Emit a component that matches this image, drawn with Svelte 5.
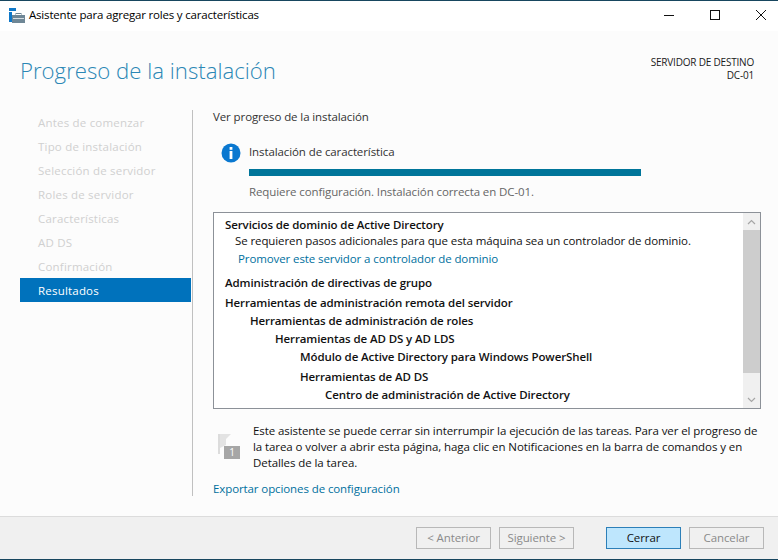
<script lang="ts">
  const steps = [
    'Antes de comenzar',
    'Tipo de instalación',
    'Selección de servidor',
    'Roles de servidor',
    'Características',
    'AD DS',
    'Confirmación',
    'Resultados'
  ];

  const tree = [
    { text: 'Administración de directivas de grupo', level: 0, gap: 'wide' },
    { text: 'Herramientas de administración remota del servidor', level: 0, gap: 'small' },
    { text: 'Herramientas de administración de roles', level: 1 },
    { text: 'Herramientas de AD DS y AD LDS', level: 2 },
    { text: 'Módulo de Active Directory para Windows PowerShell', level: 3 },
    { text: 'Herramientas de AD DS', level: 3, gap: 'small' },
    { text: 'Centro de administración de Active Directory', level: 4 }
  ];
</script>

<div class="window">
  <header class="titlebar">
    <svg class="appicon" width="16" height="16" viewBox="0 0 16 16">
      <rect x="0" y="0" width="7" height="3" fill="#0f78c8" />
      <rect x="0" y="4" width="3" height="10" fill="#0f78c8" />
      <rect x="3" y="7" width="13" height="8" fill="#6f8796" />
      <rect x="7" y="5.5" width="5" height="2" fill="none" stroke="#6f8796" />
      <rect x="4" y="10" width="11" height="1" fill="#d5dde2" />
    </svg>
    <span class="title">Asistente para agregar roles y características</span>
    <div class="winbtns">
      <svg width="12" height="12" viewBox="0 0 12 12"><path d="M1 6.5h10" stroke="#111" fill="none" /></svg>
      <svg width="12" height="12" viewBox="0 0 12 12"><rect x="1.5" y="1.5" width="9" height="9" stroke="#111" fill="none" /></svg>
      <svg width="12" height="12" viewBox="0 0 12 12"><path d="M1 1l10 10M11 1L1 11" stroke="#111" fill="none" /></svg>
    </div>
  </header>

  <div class="page">
    <div class="head">
      <h1>Progreso de la instalación</h1>
      <div class="server">SERVIDOR DE DESTINO<br />DC-01</div>
    </div>

    <div class="body">
      <nav class="steps">
        {#each steps as step, i}
          <div class="step" class:active={i === steps.length - 1}>{step}</div>
        {/each}
      </nav>

      <main class="content">
        <div class="lead">Ver progreso de la instalación</div>

        <div class="status">
          <svg class="info" width="20" height="20" viewBox="0 0 20 20">
            <circle cx="10" cy="10" r="9.5" fill="#0a78d0" />
            <rect x="8.6" y="4" width="2.8" height="2.8" fill="#fff" />
            <rect x="8.6" y="8" width="2.8" height="8" fill="#fff" />
          </svg>
          <div class="statusmain">
            <div class="statustitle">Instalación de característica</div>
            <div class="bar"></div>
            <div class="statusnote">Requiere configuración. Instalación correcta en DC-01.</div>
          </div>
        </div>

        <div class="listbox">
          <div class="list">
            <div class="row">Servicios de dominio de Active Directory</div>
            <div class="row sub">Se requieren pasos adicionales para que esta máquina sea un controlador de dominio.</div>
            <div class="row promote">Promover este servidor a controlador de dominio</div>
            {#each tree as item}
              <div class="row level{item.level} {item.gap ?? ''}">{item.text}</div>
            {/each}
          </div>
          <div class="scrollbar">
            <div class="arrow">
              <svg width="9" height="6" viewBox="0 0 9 6"><path d="M1 5l3.5-3.5L8 5" stroke="#a6a6a6" stroke-width="1.2" fill="none" /></svg>
            </div>
            <div class="thumb"></div>
            <div class="track"></div>
            <div class="arrow">
              <svg width="9" height="6" viewBox="0 0 9 6"><path d="M1 1l3.5 3.5L8 1" stroke="#a6a6a6" stroke-width="1.2" fill="none" /></svg>
            </div>
          </div>
        </div>

        <div class="notice">
          <svg class="flag" width="22" height="25" viewBox="0 0 22 25">
            <path d="M0 0h2v20H0z" fill="#dcdcdc" />
            <path d="M2 0h11l-5 5v6l-6 3z" fill="#e3e3e3" />
            <rect x="6" y="12" width="16" height="13" fill="#a6a6a6" />
          </svg>
          <span class="flagnum">1</span>
          <p>Este asistente se puede cerrar sin interrumpir la ejecución de las tareas. Para ver el progreso de la tarea o volver a abrir esta página, haga clic en Notificaciones en la barra de comandos y en Detalles de la tarea.</p>
        </div>

        <div class="export">Exportar opciones de configuración</div>
      </main>
    </div>
  </div>

  <footer class="footer">
    <button disabled>&lt; Anterior</button>
    <button disabled>Siguiente &gt;</button>
    <button class="primary">Cerrar</button>
    <button disabled>Cancelar</button>
  </footer>
</div>

<style>
  :global(body) {
    margin: 0;
    background: #fcfcfc;
  }

  .window {
    width: 778px;
    height: 560px;
    display: flex;
    flex-direction: column;
    box-sizing: border-box;
    border-top: 1px solid #17465f;
    border-bottom: 1px solid #17465f;
    font-family: "Open Sans", "Noto Sans", sans-serif;
    font-size: 11.5px;
    color: #1a1a1a;
    overflow: hidden;
    letter-spacing: -0.1px;
  }

  .titlebar {
    height: 30px;
    flex: none;
    background: #fff;
    display: flex;
    align-items: center;
    padding-left: 9px;
  }

  .appicon {
    margin-right: 4px;
  }

  .title {
    color: #000;
    letter-spacing: -0.19px;
    line-height: 14px;
    margin-bottom: 2px;
  }

  .winbtns {
    margin-left: auto;
    display: flex;
    gap: 34px;
    padding-right: 11px;
    margin-bottom: 2px;
  }

  .page {
    flex: 1;
    display: flex;
    flex-direction: column;
    background: #fcfcfc;
    min-height: 0;
  }

  .head {
    display: flex;
    justify-content: space-between;
    padding: 24px 24px 0 20px;
    height: 55px;
    flex: none;
  }

  h1 {
    margin: 0;
    font-weight: 300;
    font-size: 22.2px;
    line-height: 32px;
    color: #2b87b5;
    letter-spacing: 0;
  }

  .server {
    text-align: right;
    font-size: 10px;
    line-height: 13px;
    padding-top: 1px;
    color: #1a1a1a;
    letter-spacing: -0.2px;
  }

  .body {
    display: flex;
    padding-left: 20px;
  }

  .steps {
    width: 171px;
    flex: none;
  }

  .step {
    height: 24px;
    line-height: 26px;
    padding-left: 18px;
    color: #d0d0d0;
    letter-spacing: 0.2px;
  }

  .step.active {
    background: #0072bc;
    color: #fff;
  }

  .content {
    width: 548px;
    height: 386px;
    margin-left: 1px;
    border-left: 1px solid #c0c0c0;
    padding-left: 20px;
  }

  .lead {
    line-height: 14px;
    color: #333;
  }

  .status {
    display: flex;
    margin-top: 20px;
    padding-left: 8px;
    gap: 8px;
  }

  .statusmain {
    flex: 1;
    padding-right: 120px;
  }

  .info {
    flex: none;
    margin-top: -1px;
  }

  .statustitle {
    line-height: 16px;
    color: #333;
  }

  .bar {
    height: 7px;
    margin-top: 9px;
    background: #00759a;
  }

  .statusnote {
    margin-top: 8px;
    line-height: 16px;
    color: #666;
  }

  .listbox {
    display: flex;
    margin-top: 12px;
    height: 195px;
    border: 1px solid #8c9198;
    background: #fff;
  }

  .list {
    flex: 1;
    padding: 3px 0 0 11px;
    overflow: hidden;
  }

  .row {
    line-height: 18px;
    font-weight: 600;
    color: #111;
    white-space: nowrap;
  }

  .row.sub {
    font-weight: 400;
    padding-left: 10px;
    line-height: 14px;
  }

  .row.promote {
    font-weight: 400;
    color: #00709e;
    padding-left: 13px;
    line-height: 22px;
  }

  .row.wide {
    margin-top: 4px;
  }

  .row.small {
    margin-top: 2px;
  }

  .level1 { padding-left: 25px; }
  .level2 { padding-left: 50px; }
  .level3 { padding-left: 75px; }
  .level4 { padding-left: 100px; }

  .scrollbar {
    width: 17px;
    flex: none;
    background: #f0f0f0;
    display: flex;
    flex-direction: column;
  }

  .arrow {
    height: 17px;
    display: flex;
    align-items: center;
    justify-content: center;
    flex: none;
  }

  .thumb {
    height: 143px;
    flex: none;
    background: #cdcdcd;
  }

  .track {
    flex: 1;
  }

  .notice {
    position: relative;
    margin-top: 14px;
    padding-left: 40px;
  }

  .flag {
    position: absolute;
    left: 5px;
    top: 11px;
  }

  .flagnum {
    position: absolute;
    left: 11px;
    top: 23px;
    width: 16px;
    text-align: center;
    color: #fff;
    font-size: 10px;
    line-height: 13px;
  }

  .notice p {
    margin: 0;
    line-height: 16px;
    color: #111;
    letter-spacing: -0.08px;
  }

  .export {
    margin-top: 10px;
    line-height: 16px;
    color: #00709e;
  }

  .footer {
    flex: none;
    height: 43px;
    box-sizing: border-box;
    margin-top: auto;
    background: #f0f0f0;
    border-top: 1px solid #dcdcdc;
    display: flex;
    align-items: flex-start;
    padding: 10px 0 0 416px;
    gap: 8px;
  }

  button {
    width: 75px;
    height: 22px;
    padding: 0 0 2px;
    box-sizing: border-box;
    font: inherit;
    letter-spacing: inherit;
    background: #f0f0f0;
    border: 1px solid #b8b8b8;
    color: #8a8a8a;
  }

  button.primary {
    background: #bee6fd;
    border-color: #2c7fb8;
    color: #111;
    margin-left: 24px;
  }
</style>
